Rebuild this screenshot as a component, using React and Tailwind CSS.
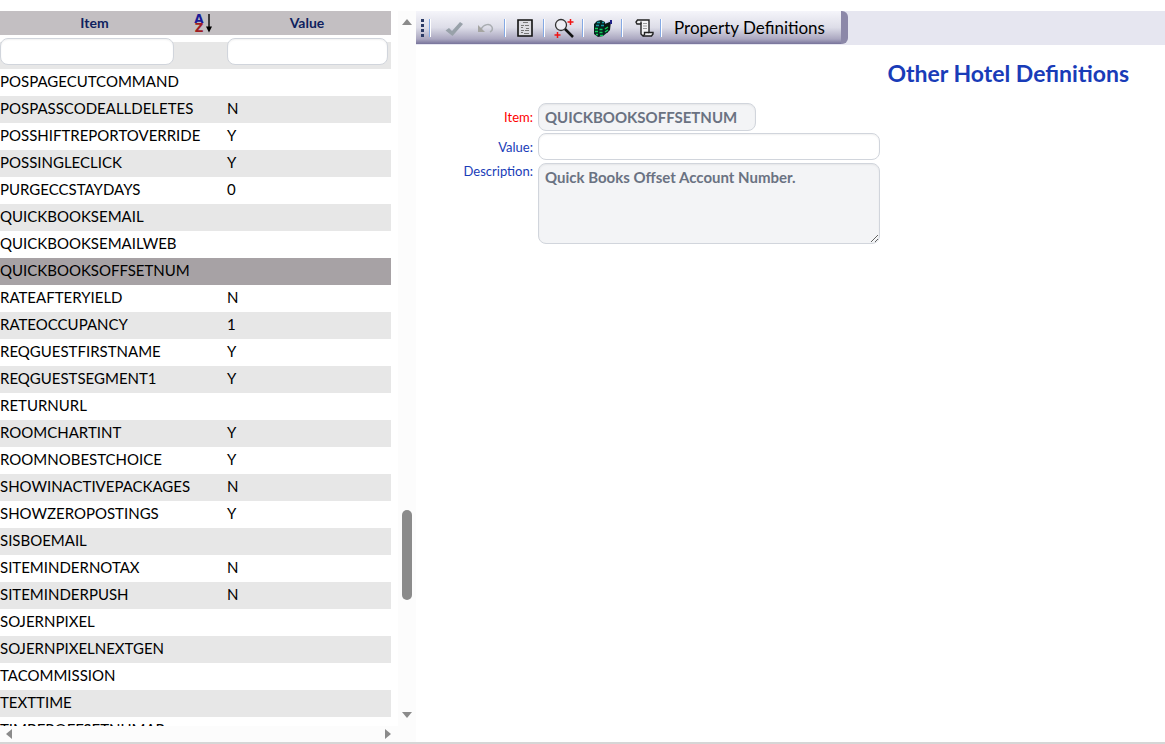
import { useState } from "react";

const DEFINITIONS = [
  ["POSPAGECUTCOMMAND", ""],
  ["POSPASSCODEALLDELETES", "N"],
  ["POSSHIFTREPORTOVERRIDE", "Y"],
  ["POSSINGLECLICK", "Y"],
  ["PURGECCSTAYDAYS", "0"],
  ["QUICKBOOKSEMAIL", ""],
  ["QUICKBOOKSEMAILWEB", ""],
  ["QUICKBOOKSOFFSETNUM", ""],
  ["RATEAFTERYIELD", "N"],
  ["RATEOCCUPANCY", "1"],
  ["REQGUESTFIRSTNAME", "Y"],
  ["REQGUESTSEGMENT1", "Y"],
  ["RETURNURL", ""],
  ["ROOMCHARTINT", "Y"],
  ["ROOMNOBESTCHOICE", "Y"],
  ["SHOWINACTIVEPACKAGES", "N"],
  ["SHOWZEROPOSTINGS", "Y"],
  ["SISBOEMAIL", ""],
  ["SITEMINDERNOTAX", "N"],
  ["SITEMINDERPUSH", "N"],
  ["SOJERNPIXEL", ""],
  ["SOJERNPIXELNEXTGEN", ""],
  ["TACOMMISSION", ""],
  ["TEXTTIME", ""],
  ["TIMBEROFFSETNUMAR", ""],
];

const fieldCls = `block border border-gray-300 rounded-lg px-1.5 text-[15px]
  shadow-[inset_0_1px_2px_rgba(0,0,0,0.06)] focus:outline-none focus:border-blue-500`;

function SortIcon() {
  return (
    <svg width="20" height="20" viewBox="0 0 20 20" className="overflow-visible">
      <g fontFamily="'DejaVu Sans', sans-serif" fontSize="12" fontWeight="bold" textAnchor="middle">
        <text x="5" y="9.500" fill="#1a1a96">A</text>
        <text x="5" y="19" fill="#a01c22">Z</text>
      </g>
      <path d="M15 1v14" stroke="#111" strokeWidth="1.500" />
      <path d="M12 13.500h6l-3 6z" fill="#000" />
    </svg>
  );
}

function CheckIcon() {
  return (
    <svg width="20" height="18" viewBox="0 0 20 18">
      <path d="M1.500 11.500 5 9l3 3L16 3l3 2L8.500 17z" fill="#98a1a9" />
    </svg>
  );
}

function UndoIcon() {
  return (
    <svg width="18" height="12" viewBox="0 0 18 12" fill="none">
      <path d="M4 7C7 2 13 1 15 5c1 2.500 0 4-2 5" stroke="#a9adb1" strokeWidth="1.500" />
      <path d="M1 3v7h7z" fill="#a5a5a2" />
    </svg>
  );
}

function FormIcon() {
  return (
    <svg width="16" height="18" viewBox="0 0 16 18" fill="none">
      <path d="M1 1h14v16H1z" fill="#dcdce2" stroke="#111" strokeWidth="1.600" />
      <path d="M6 3.500h5M4 6.500h3M8 6.500h4M4 8.500h2M9 9.500h3M4 11.500h3M8 11.500h4M4 13.500h2M7 14.500h5" stroke="#777" />
    </svg>
  );
}

function SearchIcon() {
  return (
    <svg width="20" height="20" viewBox="0 0 20 20" fill="none">
      <circle cx="7" cy="7" r="5.500" fill="#eeeef4" stroke="#333" strokeWidth="1.300" />
      <path d="m11 11 8 8" stroke="#111" strokeWidth="2.500" />
      <path d="M16.500 1v6M13.500 4h6M3.500 14v6M.500 17h6" stroke="#f01414" strokeWidth="1.500" />
    </svg>
  );
}

function BooksIcon() {
  return (
    <svg width="20" height="18" viewBox="0 0 20 18" fill="none">
      <path d="m1 5 3-3 4-1 4 2 3 1v9l-5 4-5 1-4-3z" fill="#06231f" />
      <path d="m10 4 5-1 3-1-1 9-3 3-2-5z" fill="#0a1712" />
      <path d="M4 3.500h3M9 3.500h2M3 6.500h3M8 6.500h3" stroke="#1597a3" strokeWidth="1.500" />
      <path d="M2 9.500h3M2 12.500h3M6.500 10.500h3M6.500 13.500h3M3 15.500h2M7 16.500h3M15 8l-3 2M15 11l-3 2" stroke="#11cf5b" strokeWidth="1.500" />
      <path d="m12 4 5-2" stroke="#c9d4f7" strokeWidth="1.500" />
      <path d="M18 1v4" stroke="#202087" strokeWidth="2" />
    </svg>
  );
}

function ScrollIcon() {
  return (
    <svg width="25" height="18" viewBox="-6 0 25 18" fill="none" stroke="#222" strokeWidth="1.400">
      <path d="M2.500 1H14v12.500h4V15l-1.500 2H8l-2-2V5H2L1 3z" fill="#f2f2f4" />
      <path d="M6 5V2.500M8 17l1.500-1.500v-2H14" />
      <path d="M8 4.500h4M8 7h4M8 9.500h4" stroke="#999" strokeWidth="1" />
    </svg>
  );
}

const Separator = () => <span className="w-0.5 h-[18px] bg-[#84a9e4] border-r border-white shrink-0" />;

function ToolButton({ label, children, disabled }) {
  return (
    <button type="button" aria-label={label} disabled={disabled}
      className="flex min-w-8 h-7 items-center justify-center shrink-0">
      {children}
    </button>
  );
}

const TOOLS = [
  ["Form", FormIcon],
  ["Search", SearchIcon],
  ["Records", BooksIcon],
  ["Log", ScrollIcon],
];

function Toolbar() {
  return (
    <div className="flex bg-[#e6e6f0] h-[34px]">
      <div className="flex items-center h-[33px] pl-1 border-r-[7px] border-[#8c88a8] rounded-r-md
                      bg-[linear-gradient(to_bottom,#f5f5fa_0%,#dddde8_50%,#aaa7c0_85%,#77739a_100%)]">
        <svg width="5" height="20" viewBox="0 0 5 20" fill="#2c3b66" className="mr-1 shrink-0">
          <path d="M1 1h3v3H1zM1 6h3v3H1zM1 11h3v3H1zM1 16h3v3H1z" />
        </svg>
        <Separator />
        <div className="flex pl-[7px] pr-0.5">
          <ToolButton label="Save" disabled><CheckIcon /></ToolButton>
          <ToolButton label="Undo" disabled><UndoIcon /></ToolButton>
        </div>
        <Separator />
        {TOOLS.map(([label, Icon]) => (
          <div key={label} className="flex items-center">
            <div className="flex w-[37px] justify-center">
              <ToolButton label={label}><Icon /></ToolButton>
            </div>
            <Separator />
          </div>
        ))}
        <span className="pl-3 pr-4 text-[17px] text-black whitespace-nowrap">Property Definitions</span>
      </div>
    </div>
  );
}

function DefinitionList({ selected, onSelect }) {
  return (
    <div className="grid grid-cols-[398px_18px] grid-rows-[minmax(0,1fr)_16px] shrink-0">
      <div className="overflow-hidden">
        <table className="w-[391px] table-fixed border-collapse text-[15px] text-black">
          <colgroup>
            <col className="w-[189px]" />
            <col className="w-[38px]" />
            <col />
          </colgroup>
          <thead>
            <tr className="h-6 bg-[#c3bfc2] text-sm leading-5 text-[#0f1f5f]">
              <th className="p-0 font-bold">Item</th>
              <th className="p-0">
                <button type="button" aria-label="Sort by item" className="flex pl-[5px]"><SortIcon /></button>
              </th>
              <th className="p-0 pr-1 font-bold">Value</th>
            </tr>
            <tr className="h-[34px] bg-[linear-gradient(to_bottom,#fff_7px,#e7e7e7_7px)] align-top">
              <td colSpan={2} className="p-0 pt-[3px]">
                <input aria-label="Filter items" className={`${fieldCls} w-[174px] h-[27px] bg-white`} />
              </td>
              <td className="p-0 pt-[3px] pr-[3px]">
                <input aria-label="Filter values" className={`${fieldCls} w-full h-[27px] bg-white`} />
              </td>
            </tr>
          </thead>
          <tbody>
            {DEFINITIONS.map(([item, value], i) => (
              <tr key={item} onClick={() => onSelect(item)}
                className={`h-[27px] leading-6 cursor-pointer
                  ${item === selected ? "bg-[#a7a2a5]" : i % 2 ? "bg-[#e7e7e7]" : "bg-white"}`}>
                <td colSpan={2} className="p-0 pb-[3px]">{item}</td>
                <td className="p-0 pb-[3px]">{value}</td>
              </tr>
            ))}
          </tbody>
        </table>
      </div>

      {/* vertical scroll track */}
      <div className="flex flex-col items-center bg-[#fcfcfc] py-2">
        <svg width="10" height="6" viewBox="0 0 10 6" fill="#8b8b8b"><path d="M0 6 5 0l5 6z" /></svg>
        <div className="grow-[485]" />
        <div className="w-2.5 h-[90px] rounded-full bg-[#8b8b8b]" />
        <div className="grow-[112]" />
        <svg width="10" height="6" viewBox="0 0 10 6" fill="#8b8b8b"><path d="M0 0h10L5 6z" /></svg>
      </div>

      {/* horizontal scroll track */}
      <div className="col-span-2 flex items-center justify-between bg-[#fcfcfc] pl-1.5 pr-[25px]">
        <svg width="6" height="10" viewBox="0 0 6 10" fill="#8b8b8b"><path d="M6 0v10L0 5z" /></svg>
        <svg width="6" height="10" viewBox="0 0 6 10" fill="#8b8b8b"><path d="M0 0v10l6-5z" /></svg>
      </div>
    </div>
  );
}

export default function App() {
  const [selected, setSelected] = useState("QUICKBOOKSOFFSETNUM");
  const [value, setValue] = useState("");

  return (
    <div className="flex h-screen pt-[11px] bg-white border-b-2 border-[#d6d6d6] overflow-hidden font-['Lato',sans-serif]">
      <DefinitionList selected={selected} onSelect={setSelected} />

      <main className="flex-1 min-w-0">
        <Toolbar />
        <h1 className="mt-3 pr-9 text-right text-[23px] leading-8 font-bold text-blue-800">Other Hotel Definitions</h1>

        <form className="mt-3.5 grid grid-cols-[117px_minmax(0,342px)] gap-x-[5px] gap-y-0.5 text-[13px] text-blue-800">
          <label htmlFor="item" className="text-right leading-7 text-[#ff0000]">Item:</label>
          <input id="item" value={selected} disabled readOnly
            className={`${fieldCls} w-[218px] h-7 bg-gray-100 font-bold text-gray-500`} />

          <label htmlFor="value" className="text-right leading-7">Value:</label>
          <input id="value" value={value} onChange={e => setValue(e.target.value)}
            className={`${fieldCls} w-full h-[27px] bg-white text-black`} />

          <label htmlFor="description" className="text-right leading-4">Description:</label>
          <textarea id="description" disabled value="Quick Books Offset Account Number."
            className={`${fieldCls} w-full h-[81px] py-0.5 bg-gray-100 font-bold text-gray-500`} />
        </form>
      </main>
    </div>
  );
}
